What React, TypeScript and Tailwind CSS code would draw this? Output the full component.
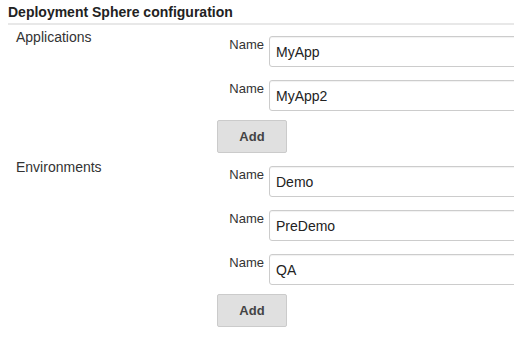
import React from "react";

const font = { fontFamily: '"Liberation Sans", Arial, sans-serif' };

function NameRow({ value }: { value: string }) {
  return (
    <div className="flex items-start">
      <div className="w-[48px] text-right text-[13px] leading-[15px] text-[#333] pr-[1px] pt-[1px]">Name</div>
      <div className="ml-[4px] h-[31px] w-[260px] shrink-0 rounded-[3px] border border-[#cccccc] bg-white pl-[6px] pt-[8px] text-[14px] leading-[15px] text-[#222] shadow-[inset_0_1px_1px_rgba(0,0,0,0.06)]">
        {value}
      </div>
    </div>
  );
}

function AddButton() {
  return (
    <div className="flex h-[33px] w-[70px] items-center justify-center rounded-[2px] border border-[#cbcbcb] bg-[#e0e0e0] text-[13px] font-bold text-[#444]">
      Add
    </div>
  );
}

function Section({ label, values }: { label: string; values: string[] }) {
  return (
    <div className="flex">
      <div className="w-[217px] shrink-0 pl-[16px] text-[14px] leading-[15px] text-[#333]">{label}</div>
      <div className="flex flex-col pt-[6px]">
        <div className="flex flex-col gap-[13px]">
          {values.map((v) => (
            <NameRow key={v} value={v} />
          ))}
        </div>
        <div className="mt-[9px]">
          <AddButton />
        </div>
      </div>
    </div>
  );
}

export default function App() {
  return (
    <div className="h-[339px] w-[514px] overflow-hidden bg-white" style={font}>
      <div className="ml-[8px] border-b-2 border-[#e8e8e8] pt-[5px] pb-[3px] text-[14px] font-bold leading-[15px] text-[#222]">
        Deployment Sphere configuration
      </div>
      <div className="mt-[5px]">
        <Section label="Applications" values={["MyApp", "MyApp2"]} />
      </div>
      <div className="mt-[7px]">
        <Section label="Environments" values={["Demo", "PreDemo", "QA"]} />
      </div>
    </div>
  );
}
